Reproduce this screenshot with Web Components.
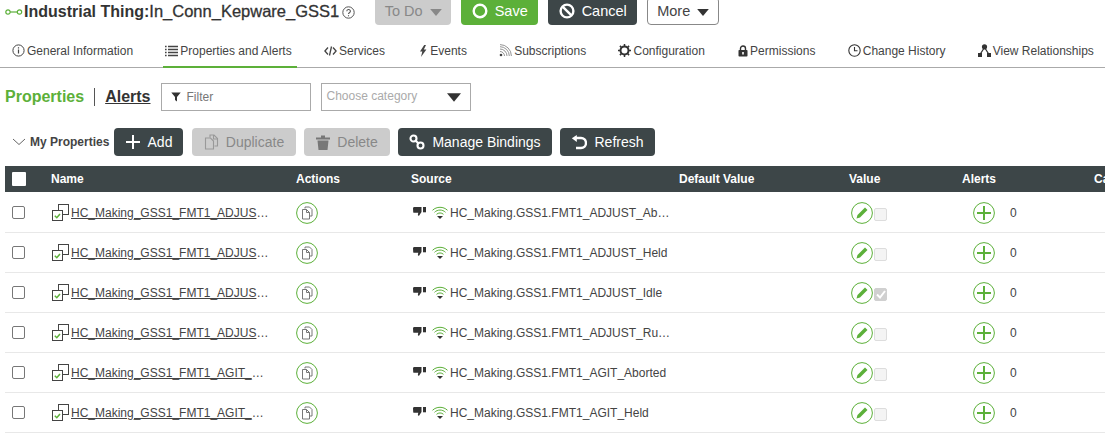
<!DOCTYPE html>
<html>
<head>
<meta charset="utf-8">
<style>
  html, body { margin: 0; height: 440px; overflow: hidden; background: #fff; }
  body { font-family: "Liberation Sans", Arial, sans-serif; color: #333; width: 1105px; }
</style>
</head>
<body>
<script>
const ICONS = {
  link: `<svg width="18" height="8" viewBox="0 0 18 8" fill="none" stroke="#5cb039" stroke-width="1.2"><circle cx="3" cy="4" r="2.2"/><circle cx="14.5" cy="4" r="2.2"/><path d="M5.2 4h7"/></svg>`,
  help: `<svg width="13" height="13" viewBox="0 0 13 13" fill="none" stroke="#555"><circle cx="6.5" cy="6.5" r="5.7"/><path d="M4.8 5.2a1.8 1.7 0 1 1 2.6 1.5c-.6.4-.9.7-.9 1.4" stroke-width="1.1"/><path d="M6.5 9.2v1.1" stroke-width="1.1"/></svg>`,
  ring: `<svg width="16" height="16" viewBox="0 0 16 16" fill="none" stroke="#fff" stroke-width="2.4"><circle cx="8" cy="8" r="6.3"/></svg>`,
  ban: `<svg width="16" height="16" viewBox="0 0 16 16" fill="none" stroke="#fff" stroke-width="2.4"><circle cx="8" cy="8" r="6.4"/><path d="M3.6 3.6l8.8 8.8"/></svg>`,
  info: `<svg width="13" height="13" viewBox="0 0 13 13" fill="none" stroke="#444"><circle cx="6.5" cy="6.5" r="5.6"/><path d="M6.5 5.6v4M6.5 3.2v1.2" stroke-width="1.2"/></svg>`,
  list: `<svg width="13" height="12" viewBox="0 0 13 12" fill="none" stroke="#444" stroke-width="1.3"><path d="M0 1.5h1.6M3 1.5h10M0 4.5h1.6M3 4.5h10M0 7.5h1.6M3 7.5h10M0 10.5h1.6M3 10.5h10"/></svg>`,
  code: `<svg width="13" height="10" viewBox="0 0 13 10" fill="none" stroke="#444" stroke-width="1.3"><path d="M4 1.5L.9 5 4 8.500M9 1.500L12.100 5 9 8.500M7.500 .5L5.500 9.500"/></svg>`,
  bolt: `<svg width="8" height="12" viewBox="0 0 8 12" fill="#444"><path d="M5.200 0L1 6.500h2.300L2 12l5.400-7.500H4.800L7 0z"/></svg>`,
  rss: `<svg width="13" height="13" viewBox="0 0 13 13" fill="none" stroke="#777" stroke-width=".8"><circle cx="2" cy="11" r="1.300" fill="#444" stroke="none"/><path d="M1 7.500a4.500 4.500 0 0 1 4.500 4.500M1 5a7 7 0 0 1 7 7M1 2.700a9.300 9.300 0 0 1 9.300 9.300M1 .6A11.400 11.400 0 0 1 12.400 12"/></svg>`,
  gear: `<svg width="13" height="13" viewBox="0 0 13 13" fill="none" stroke="#333"><circle cx="6.500" cy="6.500" r="4" stroke-width="2"/><path d="M6.500 0v2.500M6.500 10.500V13M0 6.500h2.500M10.500 6.500H13M1.900 1.900l1.700 1.700M9.400 9.400l1.700 1.700M11.100 1.900L9.400 3.600M3.600 9.400l-1.700 1.700" stroke-width="1.500"/></svg>`,
  lock: `<svg width="10" height="12" viewBox="0 0 10 12" fill="#333"><path d="M2.500 5V3.500a2.500 2.500 0 0 1 5 0V5" fill="none" stroke="#333" stroke-width="1.400"/><rect x=".5" y="5" width="9" height="6.500" rx=".8"/><rect x="4.200" y="7" width="1.600" height="2.500" fill="#fff"/></svg>`,
  clock: `<svg width="13" height="13" viewBox="0 0 13 13" fill="none" stroke="#333" stroke-width="1.100"><circle cx="6.500" cy="6.500" r="5.700"/><path d="M6.500 3v3.700h3"/></svg>`,
  tree: `<svg width="13" height="13" viewBox="0 0 13 13" fill="#333"><circle cx="6.500" cy="2.800" r="2.600"/><rect x="0" y="9" width="4" height="4"/><rect x="9" y="9" width="4" height="4"/><path d="M5.800 4.500L2.300 10M7.200 4.500l3.500 5.500" stroke="#333" stroke-width="1.300"/></svg>`,
  filter: `<svg width="10" height="10" viewBox="0 0 10 10" fill="#333"><path d="M.3 .5h9.400L6 5v4.500L4 8V5z"/></svg>`,
  chevron: `<svg width="14" height="8" viewBox="0 0 14 8" fill="none" stroke="#666"><path d="M1 1l6 5.500L13 1"/></svg>`,
  plus: `<svg width="16" height="16" viewBox="0 0 16 16" fill="none" stroke="#fff" stroke-width="2"><path d="M8 1v14M1 8h14"/></svg>`,
  dup: `<svg width="15" height="16" viewBox="0 0 15 16" fill="none" stroke="#999" stroke-width="1.100"><path d="M6 3.500V1h4l3.500 3.500V12H10.500"/><path d="M1.500 4h5l3 3v8h-8z"/><path d="M9.500 1v4h4"/></svg>`,
  trash: `<svg width="14" height="15" viewBox="0 0 14 15" fill="#777"><path d="M0 2.500h14V4.500H0zM5 .5h4v2H5zM1.500 5.500h11L11.500 15h-9z"/></svg>`,
  chain: `<svg width="16" height="16" viewBox="0 0 16 16" fill="none" stroke="#fff" stroke-width="2.100"><circle cx="4.500" cy="4.500" r="3"/><circle cx="11.500" cy="11.500" r="3"/><path d="M6.700 6.700l2.600 2.600"/></svg>`,
  undo: `<svg width="16" height="15" viewBox="0 0 16 15" fill="none" stroke="#fff" stroke-width="2.400"><path d="M4.500 3h5.500a4.900 4.900 0 0 1 0 10H5"/><path d="M5.800 0v7L.8 3.300z" fill="#fff" stroke="none"/></svg>`,
  prop: `<svg width="17" height="17" viewBox="0 0 17 17" fill="#fff" stroke="#444"><rect x="6.500" y=".5" width="10" height="10"/><rect x=".5" y="6.500" width="10" height="10"/><path d="M2.800 11.700l2 2 3.200-3.800" fill="none" stroke="#5cb039" stroke-width="1.500"/></svg>`,
  copy: `<svg width="22" height="22" viewBox="0 0 22 22" fill="none" stroke="#5cb039"><circle cx="11" cy="11" r="10.400"/><g stroke="#6a6a6a" stroke-width=".9"><path d="M9 6.500V5h4.500L16 7.500V14h-2"/><path d="M6.500 7.500h4l3 3V17h-7z"/><path d="M10.500 7.500v3h3"/></g></svg>`,
  thumb: `<svg width="13" height="9" viewBox="0 0 13 9" fill="#333"><path d="M0 1.500C0 .6.500 0 1.300 0H8.500v5L6.200 8.500C5.400 9 4.700 8.500 4.900 7.600L5.300 5.800H1.200C.4 5.800 0 5.200.2 4.500z"/><rect x="10" y="0" width="3" height="5.300"/></svg>`,
  wifi: `<svg width="16" height="13" viewBox="0 0 16 13" fill="none" stroke="#5cb039"><path d="M.5 4.300C4.500 .3 11.500 .3 15.500 4.300M2.500 6.300C5.500 3.300 10.500 3.300 13.500 6.300M4.500 8.300C6.500 6.500 9.500 6.500 11.500 8.300" stroke-width="1"/><path d="M5 10.100h6L8 12.900z" fill="#333" stroke="none"/></svg>`,
  pencil: `<svg width="22" height="22" viewBox="0 0 22 22" fill="none" stroke="#5cb039"><circle cx="11" cy="11" r="10.400"/><path d="M5.500 16.500l1-3.500 7.500-7.500 2.500 2.500L9 15.500z" fill="#5cb039" stroke="none"/></svg>`,
  plusc: `<svg width="22" height="22" viewBox="0 0 22 22" fill="none" stroke="#5cb039"><circle cx="11" cy="11" r="10.400"/><path d="M11 4v14M4 11h14" stroke-width="2"/></svg>`
};

class XIcon extends HTMLElement {
  connectedCallback() {
    const root = this.attachShadow({mode: "open"});
    root.innerHTML = `<style>:host{display:inline-flex;align-items:center;justify-content:center;flex:none;line-height:0}</style>${ICONS[this.getAttribute("name")] || ""}`;
  }
}
customElements.define("x-icon", XIcon);

const caret = (color, w, h) => `<svg width="${w}" height="${h}" viewBox="0 0 10 6" fill="${color}"><path d="M0 0h10L5 6z"/></svg>`;

const btnTemplate = document.createElement("template");
btnTemplate.innerHTML = `
  <style>
    :host {
      display: inline-flex;
      align-items: center;
      justify-content: center;
      gap: 7px;
      height: 28px;
      box-sizing: border-box;
      padding: 0 13px;
      border-radius: 4px;
      font-size: 14.5px;
      white-space: nowrap;
      background: #3d4648;
      color: #fff;
    }
    :host([kind="green"]) { background: #5cb039; }
    :host([kind="off"]) { background: #ccc; color: #888; }
    :host([kind="white"]) { background: #fff; color: #444; border: 1px solid #888; }
  </style>
  <slot></slot>
`;
class XBtn extends HTMLElement {
  connectedCallback() {
    this.attachShadow({mode: "open"}).appendChild(btnTemplate.content.cloneNode(true));
  }
}
customElements.define("x-btn", XBtn);

const titleTemplate = document.createElement("template");
titleTemplate.innerHTML = `
  <style>
    :host { display: flex; align-items: flex-end; height: 25px; padding-left: 5px; }
    .name { display: flex; align-items: center; height: 23px; align-self: flex-start; gap: 1px; white-space: nowrap; color: #333; }
    b { font-weight: bold; font-size: 16px; }
    span.rest { font-size: 16.5px; -webkit-text-stroke: .3px #333; }
    .acts { display: flex; gap: 10px; margin-left: 20px; }
    x-icon[name=help] { margin-left: 2px; margin-top: 2px; }
    .todo { width: 76px; padding: 0; }
    .save { width: 77px; padding: 0; }
    .cancel { width: 89px; padding: 0; }
    .more { width: 72px; padding: 0; }
  </style>
  <div class="name">
    <x-icon name="link"></x-icon>
    <span><b>Industrial Thing:</b><span class="rest">In_Conn_Kepware_GSS1</span></span>
    <x-icon name="help"></x-icon>
  </div>
  <div class="acts">
    <x-btn kind="off" class="todo">To Do <span id="c1"></span></x-btn>
    <x-btn kind="green" class="save"><x-icon name="ring"></x-icon>Save</x-btn>
    <x-btn class="cancel"><x-icon name="ban"></x-icon>Cancel</x-btn>
    <x-btn kind="white" class="more">More <span id="c2"></span></x-btn>
  </div>
`;
class XTitleBar extends HTMLElement {
  connectedCallback() {
    const root = this.attachShadow({mode: "open"});
    root.appendChild(titleTemplate.content.cloneNode(true));
    root.getElementById("c1").innerHTML = caret("#888", 12, 7);
    root.getElementById("c2").innerHTML = caret("#333", 12, 7);
  }
}
customElements.define("x-title-bar", XTitleBar);

class XTab extends HTMLElement {
  connectedCallback() {
    const root = this.attachShadow({mode: "open"});
    root.innerHTML = `
      <style>
        :host { display: flex; align-items: center; gap: 2px; height: 25px; box-sizing: border-box; padding: 0 5px 8px 2px; border-bottom: 2px solid transparent; margin-bottom: -1px; font-size: 12px; color: #444; white-space: nowrap; }
        :host([active]) { border-bottom-color: #5cb039; }
        x-icon { width: 13px; }
        x-icon[name=bolt], x-icon[name=lock] { width: 11px; }
      </style>
      <x-icon name="${this.getAttribute("icon")}"></x-icon><slot></slot>`;
  }
}
customElements.define("x-tab", XTab);

class XTabs extends HTMLElement {
  connectedCallback() {
    this.attachShadow({mode: "open"}).innerHTML = `
      <style>:host { display: flex; gap: 25.25px; margin-top: 18px; height: 24px; padding-left: 10px; border-bottom: 1px solid #aaa; }</style>
      <slot></slot>`;
  }
}
customElements.define("x-tabs", XTabs);

const filterTemplate = document.createElement("template");
filterTemplate.innerHTML = `
  <style>
    :host { display: flex; align-items: center; height: 28px; margin-top: 15px; padding-left: 5px; }
    .h { font-size: 16px; font-weight: bold; }
    .on { color: #5cb039; }
    .sep { width: 1px; height: 18px; background: #555; margin: 0 10px; }
    .alerts { text-decoration: underline; color: #333; }
    .box { display: flex; align-items: center; box-sizing: border-box; height: 28px; width: 150px; border: 1px solid #aaa; font-size: 12px; color: #777; }
    .filter { margin-left: 10px; padding-left: 9px; gap: 6px; }
    .select { margin-left: 10px; padding: 0 9px 2px 5px; justify-content: space-between; color: #aaa; }
    .select span { display: flex; margin-top: 2px; }
  </style>
  <span class="h on">Properties</span><span class="sep"></span><span class="h alerts">Alerts</span>
  <div class="box filter"><x-icon name="filter"></x-icon>Filter</div>
  <div class="box select">Choose category <span id="c"></span></div>
`;
class XFilterBar extends HTMLElement {
  connectedCallback() {
    const root = this.attachShadow({mode: "open"});
    root.appendChild(filterTemplate.content.cloneNode(true));
    root.getElementById("c").innerHTML = caret("#333", 14, 9);
  }
}
customElements.define("x-filter-bar", XFilterBar);

const toolbarTemplate = document.createElement("template");
toolbarTemplate.innerHTML = `
  <style>
    :host { display: flex; align-items: center; height: 28px; margin-top: 17px; padding-left: 12px; }
    .t { display: flex; align-items: center; gap: 4px; width: 97px; font-size: 12px; font-weight: bold; color: #444; margin-right: 5px; white-space: nowrap; }
    .b { display: flex; gap: 8px; }
    .add { width: 69px; padding: 0; margin-right: 1px; }
    .dup { width: 104px; padding: 0; }
    .del { width: 86px; padding: 0; }
    .bind { width: 154px; padding: 0; }
    .ref { width: 95px; padding: 0; }
    .b x-btn { gap: 7px; font-size: 14px; }
  </style>
  <div class="t"><x-icon name="chevron"></x-icon>My Properties</div>
  <div class="b">
    <x-btn class="add"><x-icon name="plus"></x-icon>Add</x-btn>
    <x-btn kind="off" class="dup"><x-icon name="dup"></x-icon>Duplicate</x-btn>
    <x-btn kind="off" class="del"><x-icon name="trash"></x-icon>Delete</x-btn>
    <x-btn class="bind"><x-icon name="chain"></x-icon>Manage Bindings</x-btn>
    <x-btn class="ref"><x-icon name="undo"></x-icon>Refresh</x-btn>
  </div>
`;
class XToolbar extends HTMLElement {
  connectedCallback() {
    this.attachShadow({mode: "open"}).appendChild(toolbarTemplate.content.cloneNode(true));
  }
}
customElements.define("x-toolbar", XToolbar);

class XPropTable extends HTMLElement {
  connectedCallback() {
    this.attachShadow({mode: "open"}).innerHTML = `
      <style>
        :host { display: block; margin: 10px 0 0 5px; --cols: 46px 245px 115px 268px 170px 113px 132px 60px; }
        .head { display: grid; grid-template-columns: var(--cols); align-items: center; height: 26px; background: #3d4648; color: #fff; font-size: 12px; font-weight: bold; white-space: nowrap; }
        .check { width: 14px; height: 14px; margin-left: 7px; background: #fff; border-radius: 1px; }
        .rows { padding-top: 1px; }
      </style>
      <div class="head">
        <div><div class="check"></div></div>
        <div>Name</div><div>Actions</div><div>Source</div><div>Default Value</div><div>Value</div><div>Alerts</div><div>Category</div>
      </div>
      <div class="rows"><slot></slot></div>`;
  }
}
customElements.define("x-prop-table", XPropTable);

class XPropRow extends HTMLElement {
  connectedCallback() {
    const name = this.getAttribute("name");
    const root = this.attachShadow({mode: "open"});
    root.innerHTML = `
      <style>
        :host { display: grid; grid-template-columns: var(--cols); align-items: center; height: 40px; box-sizing: border-box; border-bottom: 1px solid #e8e8e8; font-size: 12px; color: #444; }
        .cb { width: 13px; height: 13px; margin-left: 7px; box-sizing: border-box; border: 1px solid #777; border-radius: 2px; background: #fff; }
        .name { display: flex; align-items: center; gap: 2px; padding-left: 1px; width: 218px; }
        .name a { display: block; overflow: hidden; white-space: nowrap; text-overflow: ellipsis; text-decoration: underline; color: #444; }
        .act { display: flex; }
        .src { display: flex; align-items: center; padding-left: 2px; }
        .src span { width: 221px; overflow: hidden; white-space: nowrap; text-overflow: ellipsis; margin-left: 2px; }
        .src x-icon[name=thumb] { margin: -3px 6px 0 0; }
        .val { display: flex; align-items: center; padding-left: 2px; }
        .vb { display: flex; align-items: center; justify-content: center; width: 13px; height: 13px; box-sizing: border-box; margin: 3px 0 0 1px; border: 1px solid #ddd; border-radius: 2px; background: #f4f4f4; }
        :host([checked]) .vb { background: #d0d0d0; border-color: #d0d0d0; }
        .al { display: flex; align-items: center; gap: 15px; padding-left: 11px; }
      </style>
      <div><div class="cb"></div></div>
      <div class="name"><x-icon name="prop"></x-icon><a>HC_Making_GSS1_FMT1_${name}</a></div>
      <div class="act"><x-icon name="copy"></x-icon></div>
      <div class="src"><x-icon name="thumb"></x-icon><x-icon name="wifi"></x-icon><span>HC_Making.GSS1.FMT1_${name}</span></div>
      <div></div>
      <div class="val"><x-icon name="pencil"></x-icon><div class="vb">${this.hasAttribute("checked") ? `<svg width="10" height="9" viewBox="0 0 10 9" fill="none" stroke="#fff" stroke-width="2"><path d="M1 4.500l3 3 5-6.500"/></svg>` : ""}</div></div>
      <div class="al"><x-icon name="plusc"></x-icon>0</div>
      <div></div>`;
  }
}
customElements.define("x-prop-row", XPropRow);
</script>

<x-title-bar></x-title-bar>
<x-tabs>
  <x-tab icon="info">General Information</x-tab>
  <x-tab icon="list" active>Properties and Alerts</x-tab>
  <x-tab icon="code">Services</x-tab>
  <x-tab icon="bolt">Events</x-tab>
  <x-tab icon="rss">Subscriptions</x-tab>
  <x-tab icon="gear">Configuration</x-tab>
  <x-tab icon="lock">Permissions</x-tab>
  <x-tab icon="clock">Change History</x-tab>
  <x-tab icon="tree">View Relationships</x-tab>
</x-tabs>
<x-filter-bar></x-filter-bar>
<x-toolbar></x-toolbar>
<x-prop-table>
  <x-prop-row name="ADJUST_Aborted"></x-prop-row>
  <x-prop-row name="ADJUST_Held"></x-prop-row>
  <x-prop-row name="ADJUST_Idle" checked></x-prop-row>
  <x-prop-row name="ADJUST_Running"></x-prop-row>
  <x-prop-row name="AGIT_Aborted"></x-prop-row>
  <x-prop-row name="AGIT_Held"></x-prop-row>
</x-prop-table>
</body>
</html>
